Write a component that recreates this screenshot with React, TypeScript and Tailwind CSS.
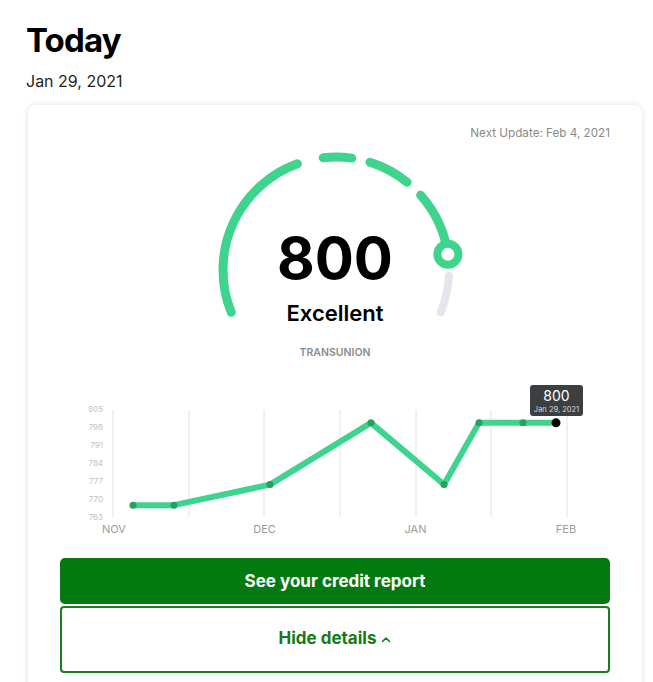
import React from "react"

const GREEN = "#3ed48d"

// gauge geometry (svg coords)
const cx = 131
const cy = 129
const r = 113

const pt = (a: number) => {
    const rad = (a * Math.PI) / 180
    return [cx + r * Math.cos(rad), cy - r * Math.sin(rad)]
}

const arc = (from: number, to: number) => {
    const [x1, y1] = pt(from)
    const [x2, y2] = pt(to)
    const large = from - to > 180 ? 1 : 0
    return `M ${x1} ${y1} A ${r} ${r} 0 ${large} 1 ${x2} ${y2}`
}

const segments = [
    [202, 110],
    [96.5, 82],
    [72.5, 51],
    [41.5, 8],
]

function Gauge() {
    const [kx, ky] = pt(8)
    return (
        <svg className="absolute left-0 top-0" width="260" height="190" viewBox="0 0 260 190">
            <path d={arc(-3, -22)} stroke="#e3e6ea" strokeWidth="8" strokeLinecap="round" fill="none" />
            {segments.map(([a, b], i) => (
                <path key={i} d={arc(a, b)} stroke={GREEN} strokeWidth="9" strokeLinecap="round" fill="none" />
            ))}
            <circle cx={kx} cy={ky} r="10.5" fill="#fff" stroke={GREEN} strokeWidth="8" />
        </svg>
    )
}

// chart: values -> page coords (viewBox matches the page)
const yOf = (v: number) => 518 - (v - 763) * (108 / 42)
const points = [
    [133, 768],
    [174, 768],
    [270, 776],
    [371, 800],
    [444, 776],
    [479, 800],
    [523, 800],
    [556, 800],
]
const yTicks = [805, 798, 791, 784, 777, 770, 763]
const gridX = [113, 189, 264, 340, 416, 491, 567]
const months = [
    { label: "NOV", x: 114 },
    { label: "DEC", x: 264.5 },
    { label: "JAN", x: 415.5 },
    { label: "FEB", x: 566 },
]

function Chart() {
    const line = points.map(([x, v]) => `${x},${yOf(v)}`).join(" ")
    return (
        <svg width="550" height="160" viewBox="60 380 550 160" className="block mt-[21px]" style={{ fontFamily: "Inter, sans-serif" }}>
            {gridX.map((x) => (
                <line key={x} x1={x} x2={x} y1="410" y2="517" stroke="#e2e2e2" strokeWidth="1" />
            ))}
            {yTicks.map((v, i) => (
                <text key={v} x="103" y={410 + i * 18} fontSize="8" fill="#c2c2c2" textAnchor="end" dominantBaseline="middle">
                    {v}
                </text>
            ))}
            {months.map((m) => (
                <text key={m.label} x={m.x} y="530" fontSize="11" fill="#9b9b9b" textAnchor="middle" dominantBaseline="middle">
                    {m.label}
                </text>
            ))}
            <polyline points={line} fill="none" stroke={GREEN} strokeWidth="6" strokeLinejoin="round" strokeLinecap="round" />
            {points.slice(0, -1).map(([x, v], i) => (
                <circle key={i} cx={x} cy={yOf(v)} r="3.5" fill="#26a05e" />
            ))}
            <circle cx="556" cy={yOf(800)} r="4.5" fill="#000" />
            <rect x="530" y="385" width="53" height="31" rx="3" fill="#3c3f42" />
            <text x="556.5" y="397" fontSize="14" fill="#fff" textAnchor="middle" dominantBaseline="middle">
                800
            </text>
            <text x="556.5" y="410" fontSize="7.5" fill="#d6d6d6" textAnchor="middle" dominantBaseline="middle">
                Jan 29, 2021
            </text>
        </svg>
    )
}

export default function App() {
    return (
        <div className="min-h-screen bg-white pl-[26px] pt-5 text-black" style={{ fontFamily: "Inter, 'Noto Sans', sans-serif" }}>
            <h1 className="text-[33px] leading-[40px] font-bold tracking-tight">Today</h1>
            <p className="mt-[9px] text-[16px] leading-6 text-[#1f1f1f]">Jan 29, 2021</p>

            <div className="mt-3 ml-[2px] w-[614px] rounded-lg bg-white px-8 pt-5 pb-8 shadow-[0_0_6px_rgba(0,0,0,0.13)]">
                <p className="text-right text-[11.7px] leading-4 text-[#8a8a8a]">Next Update: Feb 4, 2021</p>

                <div className="relative mx-auto w-[260px] pt-[88px] text-center">
                    <Gauge />
                    <div className="relative text-[58px] leading-none font-bold">800</div>
                    <div className="relative mt-[15px] text-[22px] leading-none font-semibold">Excellent</div>
                </div>

                <p className="mt-[24px] text-center text-[10.5px] leading-none font-semibold text-[#8c8c8c]">TRANSUNION</p>

                <Chart />

                <button className="mt-[18px] flex h-[46px] w-full items-center justify-center rounded-[5px] bg-[#037a0f] pt-[3px] text-[17px] font-bold text-white">
                    See your credit report
                </button>
                <button className="mt-[2px] flex h-[67px] w-full items-center justify-center gap-[5px] rounded-[4px] border-2 border-[#1b7d1b] text-[17px] font-bold text-[#157a15]">
                    Hide details
                    <svg width="10" height="7" viewBox="0 0 10 7" fill="none">
                        <path d="M1.5 5.5 L5 2 L8.5 5.5" stroke="#157a15" strokeWidth="1.6" strokeLinecap="round" strokeLinejoin="round" />
                    </svg>
                </button>
            </div>
        </div>
    )
}
